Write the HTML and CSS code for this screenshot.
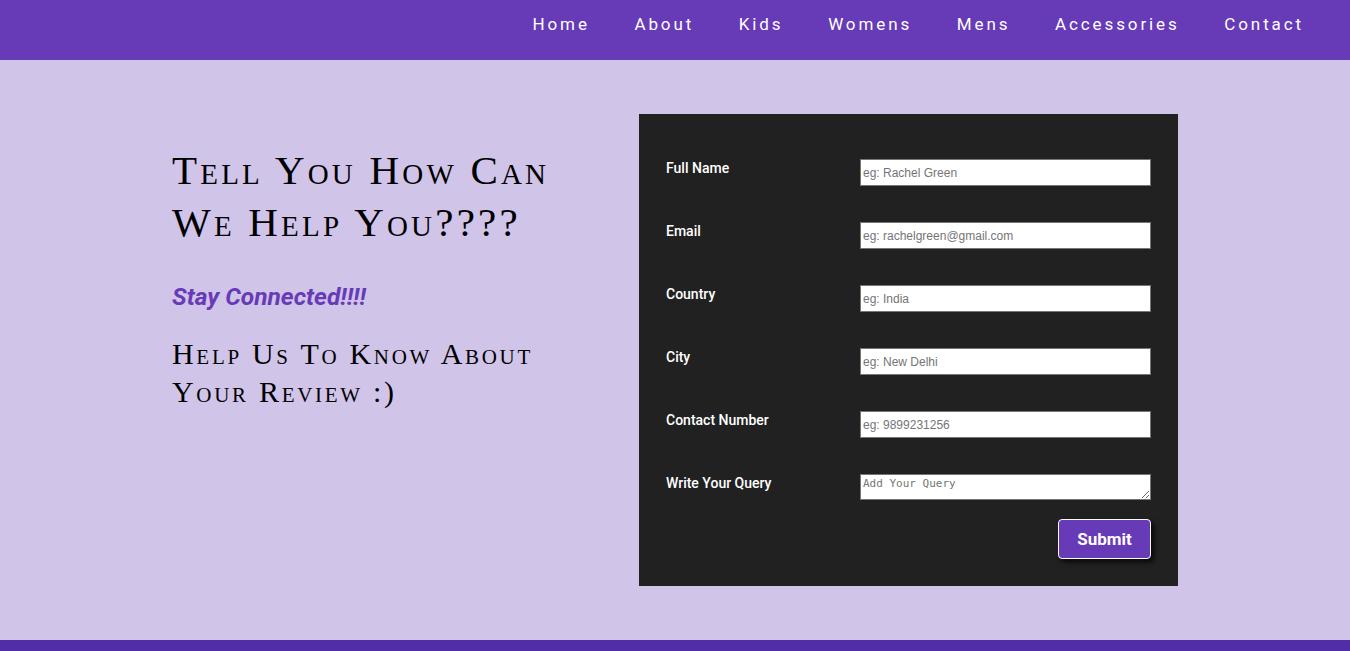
FILE: index.html
```html
<!DOCTYPE html>
<html>
<head>
<meta charset="utf-8">
<link rel="stylesheet" href="styles.css">
</head>
<body>
<nav class="nav">
  <a href="#">Home</a>
  <a href="#">About</a>
  <a href="#">Kids</a>
  <a href="#">Womens</a>
  <a href="#">Mens</a>
  <a href="#">Accessories</a>
  <a href="#">Contact</a>
</nav>
<main class="main">
  <div class="container">
    <section class="intro">
      <h1 class="title">Tell You How Can We Help You????</h1>
      <p class="tag">Stay Connected!!!!</p>
      <h2 class="sub">Help Us To Know About Your Review :)</h2>
    </section>
    <form class="form">
      <div class="row"><label>Full Name</label><input type="text" placeholder="eg: Rachel Green"></div>
      <div class="row"><label>Email</label><input type="text" placeholder="eg: rachelgreen@gmail.com"></div>
      <div class="row"><label>Country</label><input type="text" placeholder="eg: India"></div>
      <div class="row"><label>City</label><input type="text" placeholder="eg: New Delhi"></div>
      <div class="row"><label>Contact Number</label><input type="text" placeholder="eg: 9899231256"></div>
      <div class="row"><label>Write Your Query</label><textarea placeholder="Add Your Query"></textarea></div>
      <div class="actions"><button type="button" class="btn">Submit</button></div>
    </form>
  </div>
</main>
<footer class="footer"></footer>
</body>
</html>
```
FILE: styles.css
```css
* { box-sizing: border-box; }
html, body { margin: 0; padding: 0; }
body {
  background: #d1c4e9;
  font-family: Roboto, "Liberation Sans", sans-serif;
}
.nav {
  height: 60px;
  background: #673ab7;
  display: flex;
  justify-content: flex-end;
  align-items: center;
  padding-right: 46px;
  gap: 44.6px;
  padding-bottom: 12px;
}
.nav a {
  color: #fff;
  text-decoration: none;
  font-size: 17px;
  letter-spacing: 2.9px;
}
.main {
  height: 580px;
  display: flex;
  justify-content: center;
  align-items: center;
}
.container {
  width: 1006px;
  display: flex;
  align-items: flex-start;
}
.intro {
  width: 467px;
  padding-top: 30px;
}
.title {
  margin: 0;
  font-family: "Liberation Serif", serif;
  font-variant: small-caps;
  font-weight: 400;
  font-size: 41px;
  line-height: 52px;
  letter-spacing: 3.2px;
  color: #000;
  width: 420px;
}
.tag {
  margin: 34px 0 0;
  font-family: Roboto, sans-serif;
  font-style: italic;
  font-weight: 700;
  font-size: 24.5px;
  color: #673ab7;
  line-height: 30px;
}
.sub {
  margin: 23px 0 0;
  font-family: "Liberation Serif", serif;
  font-variant: small-caps;
  font-weight: 400;
  font-size: 30px;
  line-height: 38px;
  letter-spacing: 2.7px;
  color: #000;
  width: 400px;
}
.form {
  width: 539px;
  background: #212121;
  padding: 45px 27px 27px 27px;
  display: flex;
  flex-direction: column;
  gap: 36px;
}
.row {
  display: flex;
  align-items: flex-start;
}
.row label {
  width: 194px;
  color: #fff;
  font-size: 14px;
  font-weight: 500;
  line-height: 18px;
}
.row input, .row textarea {
  width: 291px;
  height: 27px;
  margin: 0;
  border: 1px solid #767676;
  background: #fff;
  padding: 2px 2px;
  font-family: "Liberation Sans", Arial, sans-serif;
  font-size: 12px;
}
.row textarea {
  height: 26px;
  font-family: "Liberation Mono", monospace;
  font-size: 11px;
  resize: vertical;
  padding: 2px 2px;
  line-height: 14px;
}
.row textarea::placeholder {
  font-family: "DejaVu Sans Mono", "Liberation Mono", monospace;
  font-size: 11px;
}
::placeholder { color: #757575; }
.actions {
  display: flex;
  justify-content: flex-end;
  margin-top: -17px;
}
.btn {
  width: 93px;
  height: 40px;
  background: #673ab7;
  border: 1px solid #fff;
  border-radius: 4px;
  color: #fff;
  font-family: Roboto, sans-serif;
  font-weight: 700;
  font-size: 17px;
  box-shadow: 3px 3px 5px rgba(0,0,0,0.8);
}
.footer {
  height: 11px;
  background: #512da8;
}
```
